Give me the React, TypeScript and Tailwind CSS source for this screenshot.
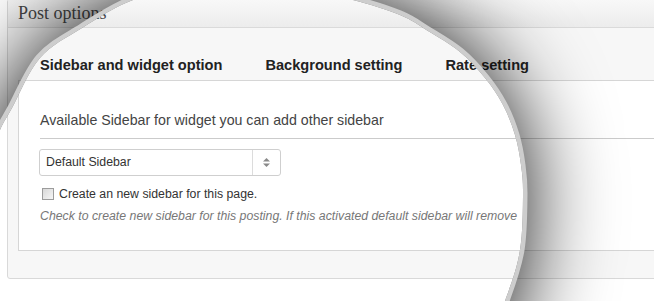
import React from 'react';

type Pt = [number, number];

// lens outline, clockwise, in page pixels (parts run off the page)
const lensPoints: Pt[] = [
  [-60, 380], [-40, 250], [-14, 165], [0, 130], [12, 108], [40, 58], [82, 28],
  [133, 0], [190, -12], [250, -14], [310, -8], [353, 0], [400, 15], [428, 31],
  [460, 52], [485, 78], [503, 105], [515, 135], [521, 165], [523, 195],
  [520, 250], [506, 298], [480, 360], [300, 420], [100, 420],
];

function smoothPath(pts: Pt[]) {
  const n = pts.length;
  let d = `M ${pts[0][0]} ${pts[0][1]}`;
  for (let i = 0; i < n; i++) {
    const p0 = pts[(i - 1 + n) % n];
    const p1 = pts[i];
    const p2 = pts[(i + 1) % n];
    const p3 = pts[(i + 2) % n];
    const c1 = [p1[0] + (p2[0] - p0[0]) / 6, p1[1] + (p2[1] - p0[1]) / 6];
    const c2 = [p2[0] - (p3[0] - p1[0]) / 6, p2[1] - (p3[1] - p1[1]) / 6];
    d += ` C ${c1[0]} ${c1[1]} ${c2[0]} ${c2[1]} ${p2[0]} ${p2[1]}`;
  }
  return d + ' Z';
}

const lens = smoothPath(lensPoints);

function LensShade() {
  return (
    <svg className="pointer-events-none absolute inset-0" width={654} height={301} viewBox="0 0 654 301">
      <defs>
        <filter id="lensBlur" filterUnits="userSpaceOnUse" x={-300} y={-300} width={1300} height={1000}>
          <feGaussianBlur stdDeviation={46} />
        </filter>
        <clipPath id="lensOutside">
          <path d={`M -300 -300 H 1000 V 700 H -300 Z ${lens}`} clipRule="evenodd" />
        </clipPath>
      </defs>
      <g clipPath="url(#lensOutside)">
        <path d={lens} fill="#000" opacity={1} filter="url(#lensBlur)" />
        <path d={lens} fill="none" stroke="#cdcdcd" strokeWidth={9} />
      </g>
    </svg>
  );
}

function SelectArrows() {
  return (
    <svg width="7" height="9" viewBox="0 0 7 9">
      <path d="M3.5 0 L7 3.5 H0 Z" fill="#8a8a8a" />
      <path d="M0 5.5 H7 L3.5 9 Z" fill="#8a8a8a" />
    </svg>
  );
}

const tabs = ['Sidebar and widget option', 'Background setting', 'Rate setting'];

export default function App() {
  return (
    <div className="relative w-[654px] h-[301px] overflow-hidden bg-white font-['Liberation_Sans',Arial,sans-serif]">
      {/* Post options metabox */}
      <div className="ml-[7px] -mt-px w-[760px] border border-[#d9d9d9] rounded-[3px] bg-[#f7f7f7]">
        <div className="h-[28px] border-b border-[#dadada] bg-gradient-to-b from-[#f8f8f8] to-[#ececec] pl-[10px]">
          <h3 className="font-['Liberation_Serif','Times_New_Roman',serif] text-[18px] leading-[27px] text-[#464646]">
            Post options
          </h3>
        </div>

        <div className="pl-[10px] pb-[27px]">
          {/* tabs */}
          <div className="h-[52px] flex items-end gap-[43px] pl-[22px] pb-[7px]">
            {tabs.map((t) => (
              <span key={t} className="text-[14.6px] leading-[16px] font-bold text-[#222]">
                {t}
              </span>
            ))}
          </div>

          {/* tab panel */}
          <div className="h-[171px] border border-[#d6d6d6] bg-white pl-[21px]">
            <h4 className="pt-[31px] pb-[10px] border-b border-[#cbcbcb] text-[14.2px] leading-[16px] text-[#444]">
              Available Sidebar for widget you can add other sidebar
            </h4>

            <div className="mt-[10px] -ml-px w-[242px] h-[27px] flex border border-[#cfcfcf] rounded-[3px] bg-white">
              <span className="flex-1 pl-[6px] text-[12.3px] leading-[25px] text-[#333]">Default Sidebar</span>
              <span className="w-[28px] flex items-center justify-center border-l border-[#dcdcdc]">
                <SelectArrows />
              </span>
            </div>

            <label className="mt-[10px] flex items-center h-[16px] text-[12.3px] leading-[16px] text-[#333]">
              <span className="ml-[2px] mr-[5px] w-[12px] h-[12px] border border-[#9c9c9c] bg-gradient-to-br from-[#d8d8d8] to-[#f6f6f6]" />
              Create an new sidebar for this page.
            </label>
            <p className="mt-[6px] text-[12.3px] leading-[16px] italic text-[#777]">
              Check to create new sidebar for this posting. If this activated default sidebar will remove
            </p>
          </div>
        </div>
      </div>

      <LensShade />
    </div>
  );
}
